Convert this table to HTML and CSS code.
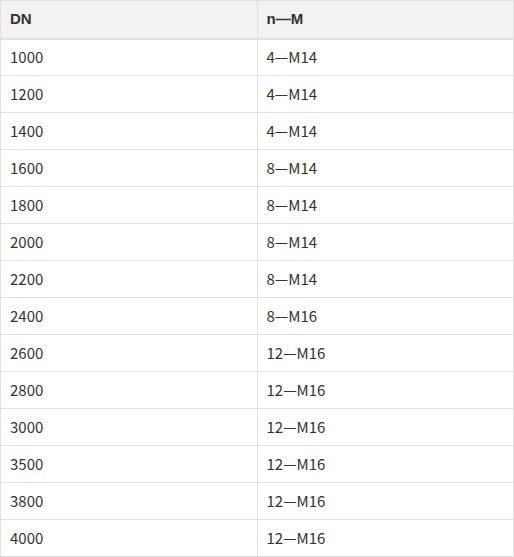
FILE: index.html
```html
<!DOCTYPE html>
<html>
<head>
<meta charset="utf-8">
<link rel="stylesheet" href="styles.css">
</head>
<body>
<table class="spec">
  <thead>
    <tr><th>DN</th><th>n—M</th></tr>
  </thead>
  <tbody>
    <tr><td>1000</td><td>4—M14</td></tr>
    <tr><td>1200</td><td>4—M14</td></tr>
    <tr><td>1400</td><td>4—M14</td></tr>
    <tr><td>1600</td><td>8—M14</td></tr>
    <tr><td>1800</td><td>8—M14</td></tr>
    <tr><td>2000</td><td>8—M14</td></tr>
    <tr><td>2200</td><td>8—M14</td></tr>
    <tr><td>2400</td><td>8—M16</td></tr>
    <tr><td>2600</td><td>12—M16</td></tr>
    <tr><td>2800</td><td>12—M16</td></tr>
    <tr><td>3000</td><td>12—M16</td></tr>
    <tr><td>3500</td><td>12—M16</td></tr>
    <tr><td>3800</td><td>12—M16</td></tr>
    <tr><td>4000</td><td>12—M16</td></tr>
  </tbody>
</table>
</body>
</html>
```
FILE: styles.css
```css
html, body {
  margin: 0;
  padding: 0;
  background: #fff;
}
.spec {
  border-collapse: collapse;
  width: 514px;
  table-layout: fixed;
  font-family: "Noto Sans CJK SC", "Noto Sans", sans-serif;
  font-size: 15px;
  color: #333;
}
.spec th,
.spec td {
  border: 1px solid #e0e0e0;
  height: 37px;
  padding: 0 9px 1px;
  text-align: left;
  line-height: 20px;
  box-sizing: border-box;
}
.spec td {
  font-weight: 400;
}
.spec th {
  background: #f2f2f2;
  font-family: "Liberation Sans", Arial, sans-serif;
  font-weight: bold;
  font-size: 15px;
  border-bottom: 2px solid #e0e0e0;
  height: 38px;
}
```
